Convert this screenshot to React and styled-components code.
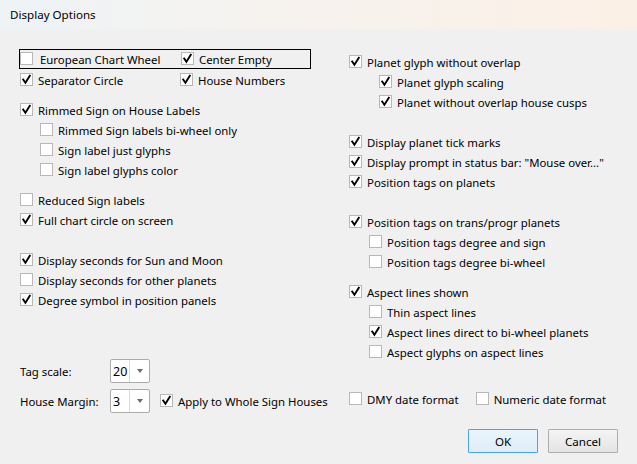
import React from "react";
import styled, { createGlobalStyle } from "styled-components";

const Global = createGlobalStyle`
  html, body { margin: 0; padding: 0; }
  body {
    width: 637px; height: 464px; overflow: hidden;
    background: #f0f0f0;
    font-family: "Noto Sans", "Open Sans", sans-serif;
    font-size: 11.4px; color: #000;
  }
`;

const Window = styled.div`
  width: 637px; height: 464px;
  display: flex; flex-direction: column;
  background: #f0f0f0;
`;

const TitleBar = styled.div`
  height: 29px; flex: none;
  display: flex; align-items: center;
  padding-left: 10px;
  background: linear-gradient(90deg, #eef3f6 0%, #f6f2ee 45%, #fbf0e6 100%);
  font-size: 11.6px;
`;

const Columns = styled.div`
  display: grid;
  grid-template-columns: 349px 1fr;
`;

const Column = styled.div`
  display: flex; flex-direction: column;
  padding-top: ${p => p.$top}px;
  padding-left: ${p => p.$left || 0}px;
`;

const Row = styled.div`
  height: ${p => p.$h || 20}px;
  display: flex; align-items: center;
  padding-left: ${p => p.$indent || 0}px;
  margin-top: ${p => p.$mt || 0}px;
  white-space: nowrap;
`;

const PairRow = styled(Row)`
  display: grid;
  grid-template-columns: 160px 1fr;
`;

const Boxed = styled.div`
  height: 18px;
  width: 290px;
  margin-left: -1px;
  border: 1px solid #000;
  display: grid;
  grid-template-columns: 161px 1fr;
  align-items: center;
  white-space: nowrap;
`;

const CheckLabel = styled.label`
  display: flex; align-items: center;
  padding-left: ${p => p.$pl || 0}px;
`;

const Box = styled.span`
  width: 13px; height: 13px; flex: none;
  box-sizing: border-box;
  border: 1px solid #b8b8b8;
  background: #fff;
  display: flex; align-items: center; justify-content: center;
  margin-bottom: 1px;
`;

const LabelText = styled.span`
  margin-left: ${p => p.$gap || 5}px;
`;

const Tick = () => (
  <svg width="11" height="11" viewBox="0 0 11 11">
    <path d="M2.2 5.6 L4.4 8.8 L8.8 1.8" fill="none" stroke="#000" strokeWidth="1.9" strokeLinecap="square" strokeLinejoin="miter" />
  </svg>
);

const Check = ({ checked, children, gap, pl }) => (
  <CheckLabel $pl={pl}>
    <Box>{checked && <Tick />}</Box>
    <LabelText $gap={gap}>{children}</LabelText>
  </CheckLabel>
);

const FieldLabel = styled.span`
  width: 90px; flex: none;
`;

const Combo = styled.div`
  width: 40px; height: 24px; box-sizing: border-box;
  border: 1px solid #acacac; border-radius: 2px;
  background: #fff;
  display: grid; grid-template-columns: 19px 1fr;
  margin-right: 10px;
  flex: none;
`;

const ComboValue = styled.span`
  display: flex; align-items: center; padding-left: 2px;
  font-size: 12.5px;
  border-right: 1px solid #d9d9d9;
`;

const ComboArrow = styled.span`
  display: flex; align-items: center; justify-content: center;
  &::after {
    content: ""; width: 0; height: 0;
    border-left: 3.5px solid transparent; border-right: 3.5px solid transparent;
    border-top: 4px solid #6d6d6d;
  }
`;

const DateRow = styled(Row)`
  gap: 17px;
`;

const ButtonBar = styled.div`
  display: flex; justify-content: flex-end; gap: 10px;
  padding-right: 19px;
  margin-top: 16px;
`;

const Button = styled.button`
  width: 70px; height: 24px; box-sizing: border-box;
  font-family: inherit; font-size: 11.6px; color: #000;
  border: 1px solid ${p => (p.$primary ? "#4da3e8" : "#adadad")};
  background: ${p => (p.$primary ? "linear-gradient(#eaf4fc, #dfedf9)" : "linear-gradient(#f4f4f4, #e4e4e4)")};
  border-radius: 1px;
  padding: 0;
`;

export default function App() {
  return (
    <Window>
      <Global />
      <TitleBar>Display Options</TitleBar>
      <Columns>
        <Column $top={20} $left={20}>
          <Boxed>
            <Check gap={7}>European Chart Wheel</Check>
            <Check checked>Center Empty</Check>
          </Boxed>
          <PairRow $mt={1}>
            <Check checked>Separator Circle</Check>
            <Check checked>House Numbers</Check>
          </PairRow>
          <Row $mt={10}><Check checked>Rimmed Sign on House Labels</Check></Row>
          <Row $indent={20}><Check>Rimmed Sign labels bi-wheel only</Check></Row>
          <Row $indent={20}><Check>Sign label just glyphs</Check></Row>
          <Row $indent={20}><Check>Sign label glyphs color</Check></Row>
          <Row $mt={10}><Check>Reduced Sign labels</Check></Row>
          <Row><Check checked>Full chart circle on screen</Check></Row>
          <Row $mt={20}><Check checked>Display seconds for Sun and Moon</Check></Row>
          <Row><Check>Display seconds for other planets</Check></Row>
          <Row><Check checked>Degree symbol in position panels</Check></Row>
          <Row $h={24} $mt={49}>
            <FieldLabel>Tag scale:</FieldLabel>
            <Combo><ComboValue>20</ComboValue><ComboArrow /></Combo>
          </Row>
          <Row $h={24} $mt={6}>
            <FieldLabel>House Margin:</FieldLabel>
            <Combo><ComboValue>3</ComboValue><ComboArrow /></Combo>
            <Check checked>Apply to Whole Sign Houses</Check>
          </Row>
        </Column>
        <Column $top={23}>
          <Row><Check checked>Planet glyph without overlap</Check></Row>
          <Row $indent={30}><Check checked>Planet glyph scaling</Check></Row>
          <Row $indent={30}><Check checked>Planet without overlap house cusps</Check></Row>
          <Row $mt={20}><Check checked>Display planet tick marks</Check></Row>
          <Row><Check checked>Display prompt in status bar: "Mouse over..."</Check></Row>
          <Row><Check checked>Position tags on planets</Check></Row>
          <Row $mt={20}><Check checked>Position tags on trans/progr planets</Check></Row>
          <Row $indent={20}><Check>Position tags degree and sign</Check></Row>
          <Row $indent={20}><Check>Position tags degree bi-wheel</Check></Row>
          <Row $mt={10}><Check checked>Aspect lines shown</Check></Row>
          <Row $indent={20}><Check>Thin aspect lines</Check></Row>
          <Row $indent={20}><Check checked>Aspect lines direct to bi-wheel planets</Check></Row>
          <Row $indent={20}><Check>Aspect glyphs on aspect lines</Check></Row>
          <DateRow $mt={27}>
            <Check>DMY date format</Check>
            <Check>Numeric date format</Check>
          </DateRow>
        </Column>
      </Columns>
      <ButtonBar>
        <Button $primary>OK</Button>
        <Button>Cancel</Button>
      </ButtonBar>
    </Window>
  );
}
